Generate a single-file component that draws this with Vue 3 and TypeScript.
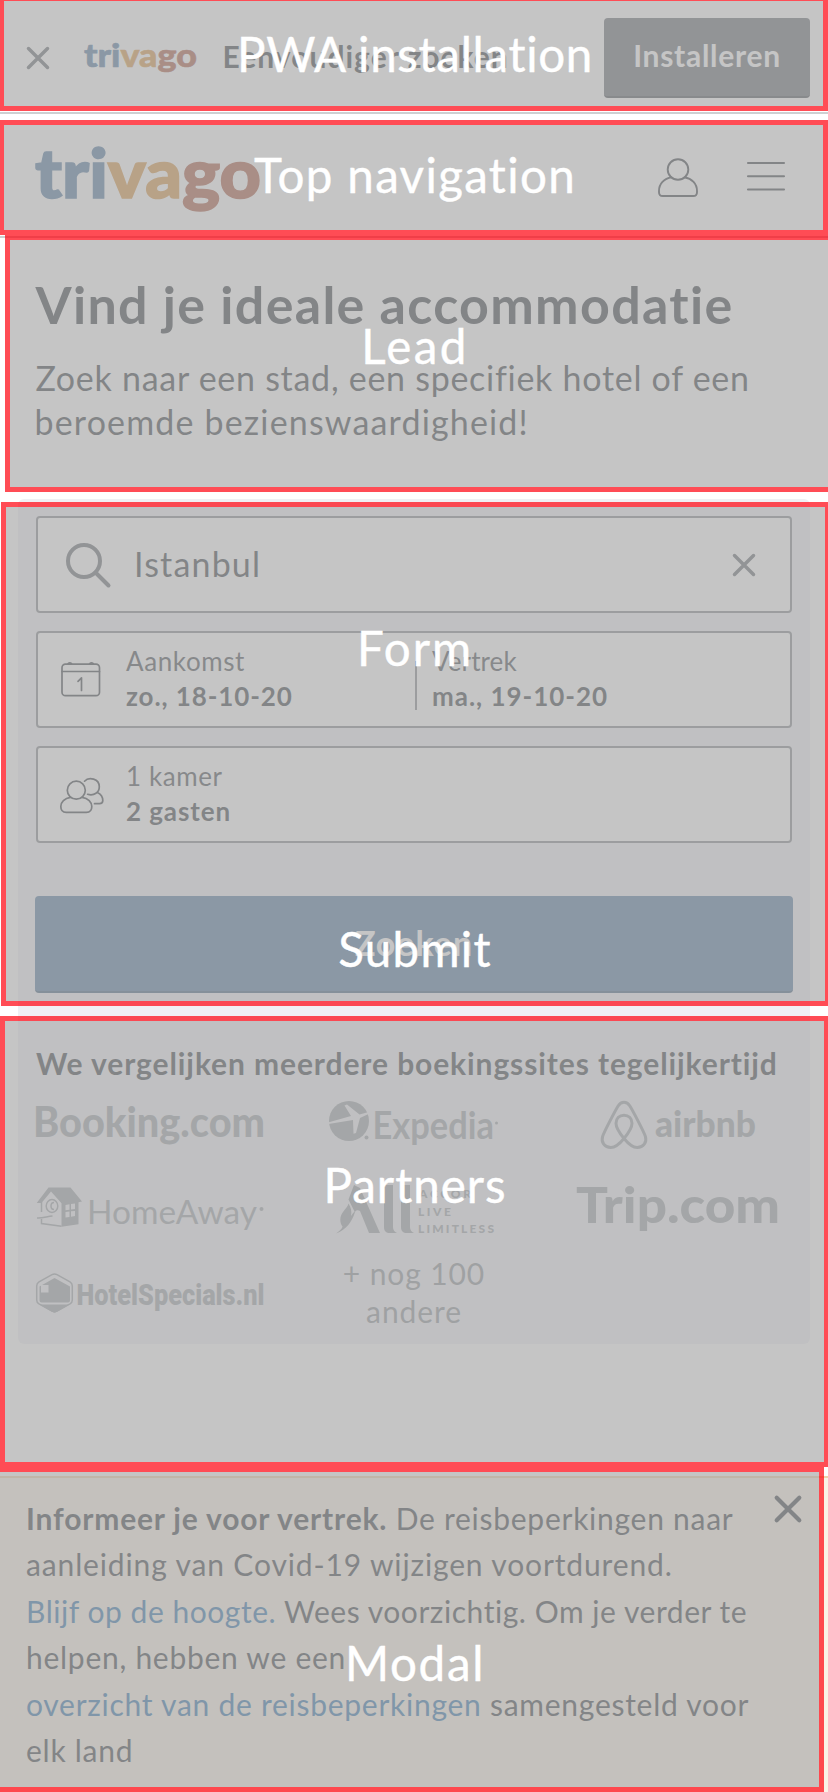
<script setup lang="ts">
interface Section {
  name: string
  x: number
  y: number
  w: number
  h: number
  labelY: number
  spacing: number
}

const sections: Section[] = [
  { name: 'PWA installation', x: -1, y: -4, w: 829, h: 115, labelY: 26.4, spacing: 0.69 },
  { name: 'Top navigation', x: -1, y: 120, w: 829, h: 115, labelY: 146.5, spacing: 1.33 },
  { name: 'Lead', x: 5, y: 235, w: 829, h: 257, labelY: 317.6, spacing: 2.4 },
  { name: 'Form', x: 1, y: 502, w: 829, h: 504, labelY: 619.6, spacing: 2 },
  { name: 'Submit', x: 0, y: 0, w: 0, h: 0, labelY: 920.6, spacing: 1.3 },
  { name: 'Partners', x: 0, y: 1016, w: 829, h: 451, labelY: 1156.8, spacing: 1.03 },
  { name: 'Modal', x: -5, y: 1467, w: 829, h: 325, labelY: 1635.4, spacing: 1.7 },
]
const boxes = sections.filter((s) => s.w > 0)
</script>

<template>
  <div class="screen">
    <header class="install">
      <svg class="install-close" width="24" height="24" viewBox="0 0 24 24"><path d="M2.5 2.5l19 19M21.5 2.5l-19 19" /></svg>
      <svg class="brand-small" width="114" height="44" viewBox="0 0 114 44">
        <text x="0" y="31.500" font-size="32" textLength="113" lengthAdjust="spacingAndGlyphs"><tspan class="b">tri</tspan><tspan class="o">va</tspan><tspan class="r">go</tspan></text>
      </svg>
      <span class="install-text">Eenvoudiger zoeken</span>
      <button class="install-btn">Installeren</button>
    </header>

    <nav class="topnav">
      <svg class="brand" width="228" height="90" viewBox="0 0 228 90">
        <text x="0" y="63" font-size="69" textLength="226" lengthAdjust="spacingAndGlyphs"><tspan class="b">tri</tspan><tspan class="o">va</tspan><tspan class="r">go</tspan></text>
      </svg>
      <svg class="user" width="42" height="40" viewBox="0 0 42 40">
        <circle cx="21" cy="11.5" r="10.3" />
        <path d="M14.6 19.3C7 20.5 2 26 2 33v1.2C2 36.600 3.400 38 5.800 38h30.400c2.400 0 3.800-1.400 3.800-3.800V33c0-7-5-12.500-12.600-13.700" />
      </svg>
      <svg class="burger" width="38" height="30" viewBox="0 0 38 30"><path d="M1 2h36M1 15.200h36M1 28.500h36" /></svg>
    </nav>

    <section class="lead">
      <h1>Vind je ideale accommodatie</h1>
      <p><span>Zoek naar een stad, een specifiek hotel of een</span><span class="second">beroemde bezienswaardigheid!</span></p>
    </section>

    <main class="panel">
      <div class="field">
        <svg class="search" width="48" height="48" viewBox="0 0 48 48"><circle cx="20" cy="20" r="16" /><path d="M31.500 31.500L44.500 44.500" /></svg>
        <span class="query">Istanbul</span>
        <svg class="clear" width="24" height="24" viewBox="0 0 24 24"><path d="M2.500 2.500l19 19M21.500 2.500l-19 19" /></svg>
      </div>

      <div class="field">
        <svg class="ico" width="46" height="40" viewBox="0 0 46 40">
          <rect x="4" y="4.200" width="37.500" height="31.500" rx="3.500" />
          <path d="M4 11.500h37.500M9.800 4.200c.6-1.800 3.400-1.800 4 0M31.500 4.200c.6-1.800 3.400-1.800 4 0M20 21.400l3.500-3.600v12.700" />
        </svg>
        <div class="pair arrive"><span class="cap">Aankomst</span><b>zo., 18-10-20</b></div>
        <i class="divider"></i>
        <div class="pair"><span class="cap tight">Vertrek</span><b class="wide">ma., 19-10-20</b></div>
      </div>

      <div class="field">
        <svg class="ico" width="46" height="40" viewBox="0 0 46 40">
          <circle cx="18.300" cy="15.200" r="9" />
          <path d="M12.500 22.300C6.500 23.200 2.800 27 2.800 31.500c0 4 2 5.800 5.400 5.800h20.200c3.400 0 5.400-1.800 5.400-5.800 0-4.500-3.700-8.300-9.700-9.200" />
          <path d="M26.500 6.200c4.500-5 14.800-2.400 14.800 5.500 0 5.500-5 9.500-11.700 7.600M39.300 17.600c3.500 1.600 5.500 4.900 5.500 8 0 2-1.300 3.100-3.300 3.100h-5" />
        </svg>
        <div class="pair"><span class="cap">1 kamer</span><b>2 gasten</b></div>
      </div>

      <button class="submit">Zoeken</button>

      <h2>We vergelijken meerdere boekingssites tegelijkertijd</h2>
      <div class="partners">
        <svg width="230" height="60" viewBox="35 1094 230 60">
          <text x="33" y="1137" font-size="42" font-weight="900" textLength="232" lengthAdjust="spacingAndGlyphs">Booking.com</text>
        </svg>
        <svg width="170" height="60" viewBox="329 1094 170 60">
          <circle cx="349" cy="1121" r="20" />
          <path class="cut" d="M328 1122.500l23-6.500-6.500-10.500 2.500-1 12.500 10 10-2.800.5 1.600-10 4.700-4 15-2.500.7-.5-13.700-24.500 4z" />
          <circle cx="366.500" cy="1137.500" r="2" />
          <text x="372.500" y="1139" font-size="38" font-weight="700" textLength="121.500" lengthAdjust="spacingAndGlyphs">Expedia</text>
          <circle cx="496.500" cy="1123" r="1.500" />
        </svg>
        <svg class="air" width="156" height="60" viewBox="601 1094 156 60">
          <path class="line" d="M624 1138.500c-5-6-8-10.500-8-15.200 0-5 3.500-8.100 8-8.100s8 3.100 8 8.100c0 4.700-3 9.200-8 15.200-4.500 5.500-8.500 9-13.200 9-6.200 0-10-5.200-8.200-11 1.600-5 13-26.500 15.500-30.500 3.200-5 8.600-5 11.800 0 2.500 4 13.900 25.500 15.500 30.500 1.800 5.800-2 11-8.200 11-4.700 0-8.700-3.500-13.200-9z" />
          <text x="655" y="1137" font-size="36" font-weight="900" textLength="101" lengthAdjust="spacingAndGlyphs">airbnb</text>
        </svg>

        <svg width="230" height="60" viewBox="35 1180 230 60">
          <path d="M48.500 1187.500h22l11.500 14-3.500.8v22l-17 2.500v-23.500l-10.500-11.800-9.500 11.500h-4.800z" />
          <path class="line thin" d="M41.500 1202v10M41.500 1219v4.500l20 2.800M37 1218c5 .5 10-1.500 15.500-2" />
          <ellipse class="line thin" cx="52" cy="1206" rx="5.800" ry="6.500" />
          <path class="line thin" d="M54 1202.500c-4 0-4 7 0 7" />
          <path class="cut" d="M65.500 1205l4-.7v5.500l-4 .4zM71 1204l4-.6v5.700l-4 .5zM65.500 1212l4-.4v5.300l-4 .6zM71 1211.300l4-.4v5.200l-4 .6z" />
          <text x="87" y="1223.500" font-size="32" textLength="170" lengthAdjust="spacingAndGlyphs">HomeAway</text>
          <circle cx="261.500" cy="1209" r="2" />
        </svg>
        <svg width="170" height="60" viewBox="329 1180 170 60">
          <path d="M354 1185l6 3 20 45h-11l-9-22c-2-1-4-1-5 1-3 10-9 18-19 21.500 4-3 6-4.500 6.500-7-3-4-3-10 .500-14.500 2.500-3.500 5-6 5.500-8.500 2.500 4 3.500 8 2.500 12.500 1-1.500 2-3 3.500-4.500l-6-12z" />
          <path d="M384 1185h9v42c0 3 1.500 5 4 6h-7c-4 0-6-2-6-6zM401 1185h9v42c0 3 1.500 5 4 6h-7c-4 0-6-2-6-6z" />
          <g class="accor"><text x="419" y="1198" textLength="52">ACCOR</text><text x="418" y="1215.500" textLength="33">LIVE</text><text x="418" y="1233" textLength="76">LIMITLESS</text></g>
        </svg>
        <svg width="216" height="60" viewBox="577 1180 216 60">
          <text x="576" y="1222.500" font-size="49" font-weight="900" textLength="204" lengthAdjust="spacingAndGlyphs">Trip.com</text>
        </svg>

        <svg width="230" height="60" viewBox="35 1266 230 60">
          <path class="line thin" d="M52 1274.600q2.500-1.400 5 0l13 7.300q2.300 1.400 2.300 4v14q0 2.600-2.300 4l-13 7.300q-2.500 1.400-5 0l-13-7.300q-2.300-1.400-2.300-4v-14q0-2.600 2.300-4z" />
          <path d="M54.500 1278l15.500 8.500v14q0 2-2 2H41.500q-2 0-2-2v-14zM39.500 1304.500h30l-12.500 7.300q-2.500 1.400-5 0z" />
          <rect class="cut" x="41" y="1285" width="7.500" height="7.500" />
          <text x="76.500" y="1304.500" font-size="29" class="hs" textLength="188" lengthAdjust="spacingAndGlyphs">HotelSpecials.nl</text>
        </svg>
        <p class="more">+ nog 100<br />andere</p>
      </div>
    </main>

    <aside class="notice">
      <div class="copy">
        <div><b>Informeer je voor vertrek.</b> De reisbeperkingen naar</div>
        <div class="loose">aanleiding van Covid-19 wijzigen voortdurend.</div>
        <div class="snug"><a>Blijf op de hoogte.</a> Wees voorzichtig. Om je verder te</div>
        <div>helpen, hebben we een</div>
        <div><a>overzicht van de reisbeperkingen</a> samengesteld voor</div>
        <div>elk land</div>
      </div>
      <svg class="dismiss" width="30" height="30" viewBox="0 0 30 30"><path d="M3.700 3.700l22.600 22.600M26.300 3.700L3.700 26.300" /></svg>
    </aside>

    <div
      v-for="s in boxes"
      :key="s.name"
      class="region"
      :style="{ left: s.x + 'px', top: s.y + 'px', width: s.w + 'px', height: s.h + 'px' }"
    ></div>
    <div v-for="s in sections" :key="s.name" class="label" :style="{ top: s.labelY + 'px', letterSpacing: s.spacing + 'px' }">{{ s.name }}</div>
  </div>
</template>

<style>
html, body { margin: 0; background: #fff; }
</style>

<style scoped>
* { box-sizing: border-box; }
.screen { position: relative; width: 828px; height: 1792px; overflow: hidden; background: #fff; color: #353b42; font-family: Lato, "Open Sans", sans-serif; display: flex; flex-direction: column; }
svg { display: block; flex: none; overflow: visible; }
button { font-family: inherit; border: 0; padding: 0; color: #fff; font-weight: 700; }
h1, h2, p { margin: 0; }

.install { height: 114px; flex: none; display: flex; align-items: center; border-bottom: 2px solid #cdd0d2; padding: 3px 18px 0 25.5px; }
.install-close path, .clear path { stroke: #62686f; stroke-width: 3.500; stroke-linecap: round; fill: none; }
.brand-small { margin-left: 34px; margin-top: -2px; }
.brand-small text, .brand text { font-family: Lato, sans-serif; font-weight: 900; }
.b { fill: #4d759d; stroke: #4d759d; }
.o { fill: #d79443; stroke: #d79443; }
.r { fill: #a9563f; stroke: #a9563f; }
.brand text { stroke-width: 1.600; }
.brand-small text { stroke-width: .6; }
.install-text { margin-left: 25px; margin-top: -4px; font-size: 30px; font-weight: 700; letter-spacing: 1.030px; white-space: nowrap; }
.install-btn { margin-left: auto; width: 206px; height: 80px; border-radius: 4px; background: #62686f; border-bottom: 2px solid #454a50; font-size: 30px; letter-spacing: .71px; padding-bottom: 3px; }

.topnav { height: 124px; flex: none; display: flex; align-items: center; border-bottom: 2px solid #cdd0d2; padding-left: 35px; }
.brand { margin-top: 9px; }
.user { margin-left: 394px; margin-top: 5px; fill: none; stroke: #353b42; stroke-width: 1.900; }
.burger { margin-left: 47.500px; margin-top: 2px; stroke: #353b42; stroke-width: 2.100; stroke-linecap: round; }

.lead { height: 261px; flex: none; padding: 36px 0 0 35.500px; }
.lead h1 { font-size: 52px; line-height: 60px; letter-spacing: 1.300px; }
.lead p { margin-top: 22px; font-size: 34px; line-height: 44px; letter-spacing: .72px; }
.lead span { display: block; }
.lead .second { letter-spacing: 1.160px; margin-left: -1px; }

.panel { width: 792px; height: 845px; flex: none; margin-left: 18px; padding: 17px 17px 0 18px; border-radius: 6px; background: #f0f0f4; }
.field { height: 97px; margin-bottom: 18px; margin-right: 1px; border: 2px solid #81868c; border-radius: 4px; background: #fff; display: flex; align-items: center; }
.search { margin-left: 26px; fill: none; stroke: #62686f; stroke-width: 4; stroke-linecap: round; }
.query { margin-left: 22px; font-size: 34px; letter-spacing: 1.170px; margin-top: -3px; }
.clear { margin-left: auto; margin-right: 34.500px; }
.ico { margin-left: 20px; fill: none; stroke: #353b42; stroke-width: 1.700; stroke-linejoin: round; stroke-linecap: round; }
.pair { margin-left: 22px; margin-top: -1px; font-size: 26px; line-height: 35px; }
.pair .cap { display: block; letter-spacing: .6px; color: #42474d; }
.pair .tight { letter-spacing: .1px; }
.pair b { display: block; letter-spacing: .9px; }
.pair .wide { letter-spacing: .970px; }
.arrive { width: 289px; }
.divider { width: 2px; height: 49px; margin: 12px 0 0; background: #81868c; }
.divider + .pair { margin-left: 15px; }
.submit { display: block; width: 758px; height: 97px; margin: 53px 0 0 -1px; border-radius: 4px; background: #4d759d; border-bottom: 2px solid #3c5c7b; font-size: 34px; letter-spacing: 1px; padding-bottom: 3px; }
.panel h2 { margin: 52px -10px 0 0; font-size: 30px; line-height: 36px; letter-spacing: .9px; white-space: nowrap; }
.partners { display: grid; grid-template-columns: 252px 254px 252px; grid-template-rows: 86px 86px 60px; margin: 13px 0 0 -1px; fill: #9aa0a6; }
.partners svg:nth-child(3n + 1) { justify-self: start; }
.partners svg:nth-child(3n + 2) { justify-self: center; }
.partners svg:nth-child(6) { justify-self: end; }
.partners .air { justify-self: end; margin-right: 36px; }
.partners text { font-family: Lato, sans-serif; }
.partners .hs { font-family: Roboto, sans-serif; font-weight: 900; }
.accor text { font-size: 12px; font-weight: 900; }
.cut { fill: #f0f0f4; }
.line { fill: none; stroke: #9aa0a6; stroke-width: 3; }
.thin { stroke-width: 1.500; }
.more { text-align: center; font-size: 30px; line-height: 38px; letter-spacing: .9px; color: #8c9196; margin-top: -12px; white-space: nowrap; }

.notice { margin-top: 132px; height: 316px; flex: none; border-top: 2px solid #f0d2aa; background: #faf2e7; padding: 17px 0 0 26px; display: flex; }
.copy { width: 747px; font-size: 30px; line-height: 46.400px; letter-spacing: .73px; white-space: nowrap; }
.copy b { letter-spacing: .82px; }
.copy .loose { letter-spacing: .860px; }
.copy .snug { letter-spacing: .540px; }
.copy a { color: #2b70a8; }
.dismiss { margin-top: -1px; stroke: #353b42; stroke-width: 4.200; stroke-linecap: round; }

.region { position: absolute; border: 5px solid rgba(255, 0, 13, .7); background: rgba(169, 169, 169, .675); background-clip: padding-box; }
.label { position: absolute; left: 0; width: 830px; text-align: center; color: #fff; font-size: 47.500px; line-height: 56px; white-space: nowrap; -webkit-text-stroke: .4px #fff; }
</style>
